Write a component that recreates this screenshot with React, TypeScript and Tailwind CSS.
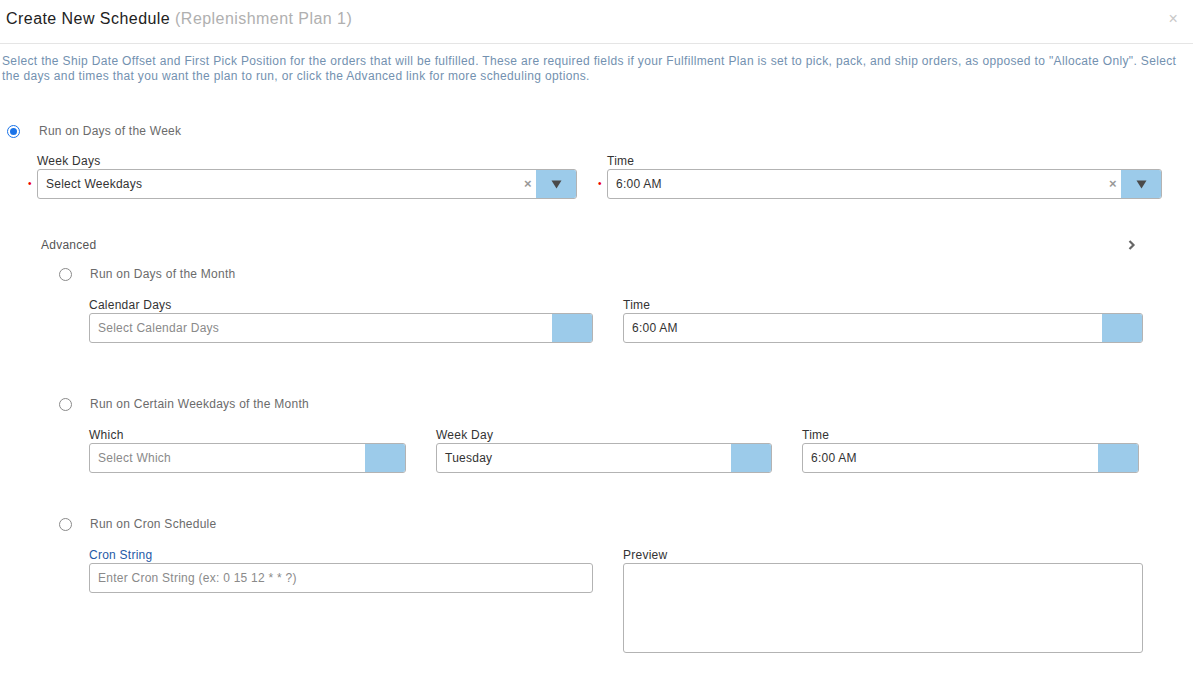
import React from "react";

const font = { fontFamily: '"Liberation Sans", Arial, sans-serif' };

function Radio({ checked }: { checked?: boolean }) {
  return checked ? (
    <span className="flex h-[13px] w-[13px] shrink-0 items-center justify-center rounded-full border-[1.5px] border-[#1a73e8] bg-white">
      <span className="block h-[7px] w-[7px] rounded-full bg-[#1a73e8]" />
    </span>
  ) : (
    <span className="block h-[13px] w-[13px] shrink-0 rounded-full border border-[#8a8a8a] bg-white" />
  );
}

function Caret() {
  return (
    <svg width="11" height="9" viewBox="0 0 11 9">
      <path d="M0.5 0.5h10L5.5 8.5z" fill="#4a4a4a" />
    </svg>
  );
}

function Select({
  value,
  placeholder,
  width,
  clear,
  caret,
}: {
  value?: string;
  placeholder?: string;
  width: string;
  clear?: boolean;
  caret?: boolean;
}) {
  return (
    <div className={`flex h-[30px] ${width} overflow-hidden rounded-[3px] border border-[#b3b3b3] bg-white`}>
      <div className={`flex flex-1 items-center pl-2 text-[12px] ${value ? "text-[#333]" : "text-[#8a8a8a]"}`}>
        {value ?? placeholder}
      </div>
      {clear && (
        <div className="flex w-[16px] items-center justify-center text-[13px] font-bold text-[#999]">×</div>
      )}
      <div className="flex w-[40px] items-center justify-center bg-[#9ccbea]">{caret && <Caret />}</div>
    </div>
  );
}

function Field({ label, children, blue }: { label: string; children: React.ReactNode; blue?: boolean }) {
  return (
    <div className="flex flex-col">
      <div className={`mb-[1px] h-[14px] text-[12px] leading-[14px] ${blue ? "text-[#1f5aa6]" : "text-[#333]"}`}>
        {label}
      </div>
      {children}
    </div>
  );
}

function Option({ label, className, children }: { label: string; className?: string; children: React.ReactNode }) {
  return (
    <div className={`flex flex-col ${className ?? ""}`}>
      <div className="flex h-[14px] items-center">
        <div className="ml-[18px] w-[31px]">
          <Radio />
        </div>
        <span className="text-[12px] text-[#6b6b6b]">{label}</span>
      </div>
      <div className="mt-[17px] flex gap-[30px] pl-[48px]">{children}</div>
    </div>
  );
}

export default function App() {
  return (
    <div className="min-h-screen w-[1193px] bg-white tracking-[0.25px]" style={font}>
      {/* Header */}
      <header className="flex h-[44px] items-start justify-between border-b border-[#e5e5e5] px-[6px] pt-[7px]">
        <h1 className="text-[16px] tracking-[0.45px] text-[#222]">
          Create New Schedule <span className="text-[#b0b0b0]">(Replenishment Plan 1)</span>
        </h1>
        <span className="mr-[9px] text-[16px] text-[#c8c8c8]">×</span>
      </header>

      <p className="px-[2px] pt-[10px] text-[12px] leading-[15px] tracking-[0.35px] text-[#7391b0]">
        Select the Ship Date Offset and First Pick Position for the orders that will be fulfilled. These are required fields if your Fulfillment Plan is set to pick, pack, and ship orders, as opposed to "Allocate Only". Select the days and times that you want the plan to run, or click the Advanced link for more scheduling options.
      </p>

      {/* Days of week */}
      <div className="mt-[40px] flex h-[14px] items-center">
        <div className="ml-[7px] w-[32px]">
          <Radio checked />
        </div>
        <span className="text-[12px] text-[#6b6b6b]">Run on Days of the Week</span>
      </div>

      <div className="mt-[16px] flex pl-[28px]">
        <div className="flex items-end">
          <span className="mb-[10px] w-[9px] text-[10px] leading-none text-[#e00]">•</span>
          <Field label="Week Days">
            <Select value="Select Weekdays" width="w-[540px]" clear caret />
          </Field>
        </div>
        <div className="ml-[21px] flex items-end">
          <span className="mb-[10px] w-[9px] text-[10px] leading-none text-[#e00]">•</span>
          <Field label="Time">
            <Select value="6:00 AM" width="w-[555px]" clear caret />
          </Field>
        </div>
      </div>

      {/* Advanced */}
      <div className="ml-[41px] mt-[39px] flex h-[14px] w-[1095px] items-center justify-between">
        <span className="text-[12px] text-[#555]">Advanced</span>
        <svg width="8" height="10" viewBox="0 0 8 10">
          <path d="M1.5 1l4 4-4 4" stroke="#666" strokeWidth="2.2" fill="none" />
        </svg>
      </div>

      <div className="ml-[41px] mt-[15px] flex flex-col">
        <Option label="Run on Days of the Month">
          <Field label="Calendar Days">
            <Select placeholder="Select Calendar Days" width="w-[504px]" />
          </Field>
          <Field label="Time">
            <Select value="6:00 AM" width="w-[520px]" />
          </Field>
        </Option>

        <Option label="Run on Certain Weekdays of the Month" className="mt-[54px]">
          <Field label="Which">
            <Select placeholder="Select Which" width="w-[317px]" />
          </Field>
          <Field label="Week Day">
            <Select value="Tuesday" width="w-[336px]" />
          </Field>
          <Field label="Time">
            <Select value="6:00 AM" width="w-[337px]" />
          </Field>
        </Option>

        <Option label="Run on Cron Schedule" className="mt-[44px]">
          <Field label="Cron String" blue>
            <div className="flex h-[30px] w-[504px] items-center rounded-[3px] border border-[#b3b3b3] pl-2 text-[12px] text-[#8a8a8a]">
              Enter Cron String (ex: 0 15 12 * * ?)
            </div>
          </Field>
          <Field label="Preview">
            <div className="h-[90px] w-[520px] rounded-[3px] border border-[#b3b3b3]" />
          </Field>
        </Option>
      </div>
    </div>
  );
}
